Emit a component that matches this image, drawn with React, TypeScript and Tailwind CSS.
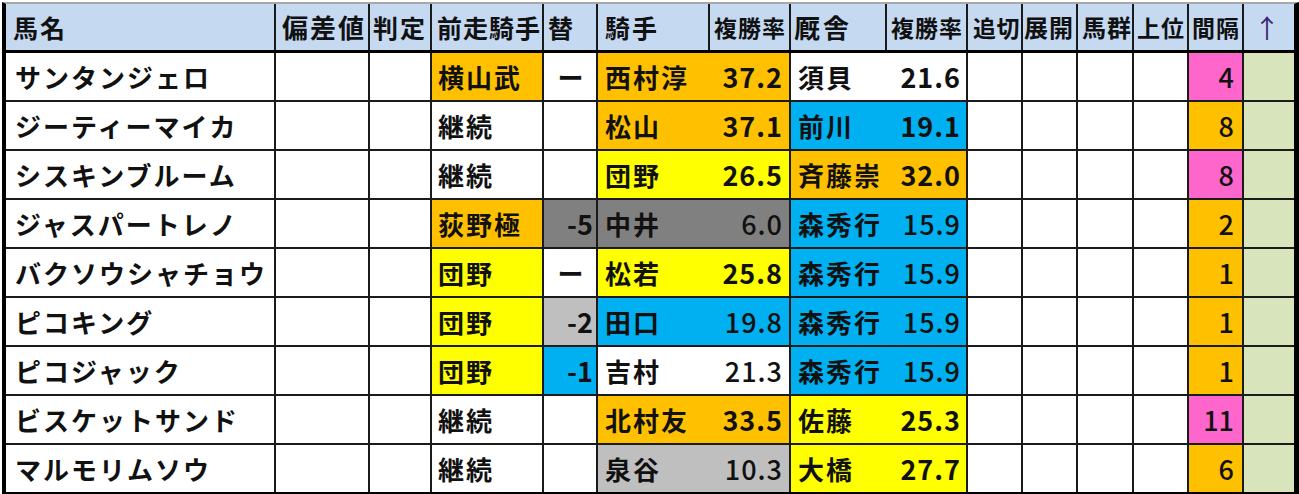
import React from "react";

const ORANGE = "bg-[#ffc000]";
const YELLOW = "bg-[#ffff00]";
const BLUE = "bg-[#00b0f0]";
const GRAY = "bg-[#808080]";
const LGRAY = "bg-[#bfbfbf]";
const PINK = "bg-[#ff66cc]";
const WHITE = "bg-white";

type Row = {
  name: string;
  prev: string;
  prevBg: string;
  change: string;
  changeBg: string;
  jockey: string;
  jRate: string;
  jBg: string;
  jThin?: boolean;
  trainer: string;
  tRate: string;
  tBg: string;
  tThin?: boolean;
  gap: string;
  gapBg: string;
};

const ROWS: Row[] = [
  { name: "サンタンジェロ", prev: "横山武", prevBg: ORANGE, change: "ー", changeBg: WHITE, jockey: "西村淳", jRate: "37.2", jBg: ORANGE, trainer: "須貝", tRate: "21.6", tBg: WHITE, gap: "4", gapBg: PINK },
  { name: "ジーティーマイカ", prev: "継続", prevBg: WHITE, change: "", changeBg: WHITE, jockey: "松山", jRate: "37.1", jBg: ORANGE, trainer: "前川", tRate: "19.1", tBg: BLUE, gap: "8", gapBg: ORANGE },
  { name: "シスキンブルーム", prev: "継続", prevBg: WHITE, change: "", changeBg: WHITE, jockey: "団野", jRate: "26.5", jBg: YELLOW, trainer: "斉藤崇", tRate: "32.0", tBg: ORANGE, gap: "8", gapBg: PINK },
  { name: "ジャスパートレノ", prev: "荻野極", prevBg: ORANGE, change: "-5", changeBg: GRAY, jockey: "中井", jRate: "6.0", jBg: GRAY, jThin: true, trainer: "森秀行", tRate: "15.9", tBg: BLUE, tThin: true, gap: "2", gapBg: ORANGE },
  { name: "バクソウシャチョウ", prev: "団野", prevBg: YELLOW, change: "ー", changeBg: WHITE, jockey: "松若", jRate: "25.8", jBg: YELLOW, trainer: "森秀行", tRate: "15.9", tBg: BLUE, tThin: true, gap: "1", gapBg: ORANGE },
  { name: "ピコキング", prev: "団野", prevBg: YELLOW, change: "-2", changeBg: LGRAY, jockey: "田口", jRate: "19.8", jBg: BLUE, jThin: true, trainer: "森秀行", tRate: "15.9", tBg: BLUE, tThin: true, gap: "1", gapBg: ORANGE },
  { name: "ピコジャック", prev: "団野", prevBg: YELLOW, change: "-1", changeBg: BLUE, jockey: "吉村", jRate: "21.3", jBg: WHITE, jThin: true, trainer: "森秀行", tRate: "15.9", tBg: BLUE, tThin: true, gap: "1", gapBg: ORANGE },
  { name: "ビスケットサンド", prev: "継続", prevBg: WHITE, change: "", changeBg: WHITE, jockey: "北村友", jRate: "33.5", jBg: ORANGE, trainer: "佐藤", tRate: "25.3", tBg: YELLOW, gap: "11", gapBg: PINK },
  { name: "マルモリムソウ", prev: "継続", prevBg: WHITE, change: "", changeBg: WHITE, jockey: "泉谷", jRate: "10.3", jBg: LGRAY, jThin: true, trainer: "大橋", tRate: "27.7", tBg: YELLOW, gap: "6", gapBg: ORANGE },
];

const COLS =
  "grid grid-cols-[268px_92px_60px_110px_52px_110px_79px_94px_79px_53px_53px_54px_53px_53px_50px]";

function H({ children, className = "" }: { children?: React.ReactNode; className?: string }) {
  return (
    <div className={`flex items-center overflow-hidden whitespace-nowrap bg-[#c5d9f1] leading-none ${className}`}>
      {children}
    </div>
  );
}

export default function App() {
  return (
    <div className="h-[494px] w-[1299px] overflow-hidden bg-white pt-[2px] font-['Noto_Sans_CJK_JP',sans-serif] font-bold text-[#111]">
      <div className="ml-[2px] border-t-2 border-r-[5px] border-b-2 border-l-4 border-t-[#a8a8a8] border-r-black border-b-black border-l-black">
        {/* header */}
        <div className={`${COLS} h-[49px] gap-x-[2px] border-b-[3px] border-black bg-[#1a1a1a]`}>
          <H className="pl-[7px] text-[25px] tracking-[2px]">馬名</H>
          <H className="pl-[6px] text-[26px] tracking-[2px]">偏差値</H>
          <H className="pl-[3px] text-[25px] tracking-[2px]">判定</H>
          <H className="pl-[5px] text-[25px] tracking-[1px]">前走騎手</H>
          <H className="pl-[4px] text-[25px]">替</H>
          <H className="pl-[7px] text-[25px] tracking-[2px]">騎手</H>
          <H className="pl-[4px] text-[23px] tracking-[1px]">複勝率</H>
          <H className="pl-[3px] text-[26px] tracking-[3px]">厩舎</H>
          <H className="pl-[4px] text-[23px] tracking-[1px]">複勝率</H>
          <H className="pl-[5px] text-[23px] tracking-[0.5px]">追切</H>
          <H className="pl-[1px] text-[24px] tracking-[1px]">展開</H>
          <H className="pl-[4px] text-[24px] tracking-[1px]">馬群</H>
          <H className="pl-[3px] text-[23px] tracking-[1px]">上位</H>
          <H className="pl-[3px] text-[23px] tracking-[1px]">間隔</H>
          <H className="pl-[10px] text-[26px] font-normal text-[#3d2470]">↑</H>
        </div>
        {/* body */}
        <div className={`${COLS} auto-rows-[47px] gap-[2px] bg-[#1a1a1a] text-[26px] leading-none`}>
          {ROWS.map((r) => (
            <React.Fragment key={r.name}>
              <div className="flex items-center whitespace-nowrap bg-white pl-[9px] tracking-[2px]">{r.name}</div>
              <div className="bg-white" />
              <div className="bg-white" />
              <div className={`flex items-center pl-[6px] tracking-[2px] ${r.prevBg}`}>{r.prev}</div>
              {r.change === "ー" ? (
                <div className={`flex items-center justify-center pl-[1px] ${r.changeBg}`}>ー</div>
              ) : (
                <div className={`flex items-center justify-end pr-[3px] text-[27px] ${r.changeBg}`}>{r.change}</div>
              )}
              <div className={`col-span-2 flex items-center justify-between pr-[6px] pl-[7px] ${r.jBg}`}>
                <span className="tracking-[2px]">{r.jockey}</span>
                <span className={`text-[27px] tracking-[1px] ${r.jThin ? "font-medium" : ""}`}>{r.jRate}</span>
              </div>
              <div className={`col-span-2 flex items-center justify-between pr-[5px] pl-[7px] ${r.tBg}`}>
                <span className="tracking-[2px]">{r.trainer}</span>
                <span className={`text-[27px] tracking-[1px] ${r.tThin ? "font-medium" : ""}`}>{r.tRate}</span>
              </div>
              <div className="bg-white" />
              <div className="bg-white" />
              <div className="bg-white" />
              <div className="bg-white" />
              <div className={`flex items-center justify-end pr-[8px] text-[27px] font-medium ${r.gapBg}`}>{r.gap}</div>
              <div className="bg-[#d8e4bc]" />
            </React.Fragment>
          ))}
        </div>
      </div>
    </div>
  );
}
